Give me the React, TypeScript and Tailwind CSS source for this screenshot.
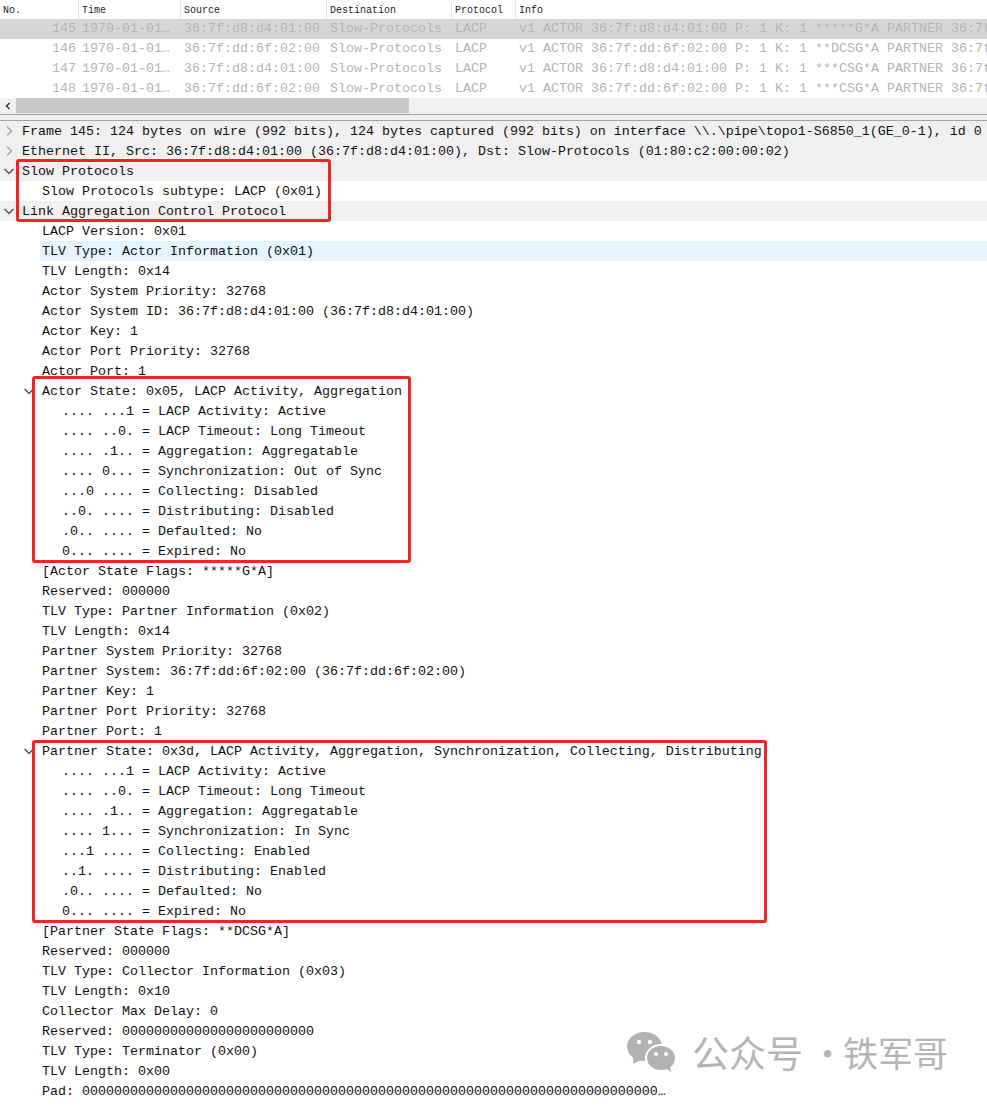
import React from "react";

const mono = "font-['Liberation_Mono',monospace]";

const packets = [
  ["145", "36:7f:d8:d4:01:00", "v1 ACTOR 36:7f:d8:d4:01:00 P: 1 K: 1 *****G*A PARTNER 36:7f:dd:6f:02:00"],
  ["146", "36:7f:dd:6f:02:00", "v1 ACTOR 36:7f:dd:6f:02:00 P: 1 K: 1 **DCSG*A PARTNER 36:7f:d8:d4:01:00"],
  ["147", "36:7f:d8:d4:01:00", "v1 ACTOR 36:7f:d8:d4:01:00 P: 1 K: 1 ***CSG*A PARTNER 36:7f:dd:6f:02:00"],
  ["148", "36:7f:dd:6f:02:00", "v1 ACTOR 36:7f:dd:6f:02:00 P: 1 K: 1 ***CSG*A PARTNER 36:7f:d8:d4:01:00"],
];

type Row = { t: string; l: 0 | 1 | 2; c?: "r" | "d"; bg?: string };

const rows: Row[] = [
  { t: "Frame 145: 124 bytes on wire (992 bits), 124 bytes captured (992 bits) on interface \\\\.\\pipe\\topo1-S6850_1(GE_0-1), id 0", l: 0, c: "r", bg: "bg-[#f0f0f0]" },
  { t: "Ethernet II, Src: 36:7f:d8:d4:01:00 (36:7f:d8:d4:01:00), Dst: Slow-Protocols (01:80:c2:00:00:02)", l: 0, c: "r", bg: "bg-[#f0f0f0]" },
  { t: "Slow Protocols", l: 0, c: "d", bg: "bg-[#f0f0f0]" },
  { t: "Slow Protocols subtype: LACP (0x01)", l: 1 },
  { t: "Link Aggregation Control Protocol", l: 0, c: "d", bg: "bg-[#f0f0f0]" },
  { t: "LACP Version: 0x01", l: 1 },
  { t: "TLV Type: Actor Information (0x01)", l: 1, bg: "sel" },
  { t: "TLV Length: 0x14", l: 1 },
  { t: "Actor System Priority: 32768", l: 1 },
  { t: "Actor System ID: 36:7f:d8:d4:01:00 (36:7f:d8:d4:01:00)", l: 1 },
  { t: "Actor Key: 1", l: 1 },
  { t: "Actor Port Priority: 32768", l: 1 },
  { t: "Actor Port: 1", l: 1 },
  { t: "Actor State: 0x05, LACP Activity, Aggregation", l: 1, c: "d" },
  { t: ".... ...1 = LACP Activity: Active", l: 2 },
  { t: ".... ..0. = LACP Timeout: Long Timeout", l: 2 },
  { t: ".... .1.. = Aggregation: Aggregatable", l: 2 },
  { t: ".... 0... = Synchronization: Out of Sync", l: 2 },
  { t: "...0 .... = Collecting: Disabled", l: 2 },
  { t: "..0. .... = Distributing: Disabled", l: 2 },
  { t: ".0.. .... = Defaulted: No", l: 2 },
  { t: "0... .... = Expired: No", l: 2 },
  { t: "[Actor State Flags: *****G*A]", l: 1 },
  { t: "Reserved: 000000", l: 1 },
  { t: "TLV Type: Partner Information (0x02)", l: 1 },
  { t: "TLV Length: 0x14", l: 1 },
  { t: "Partner System Priority: 32768", l: 1 },
  { t: "Partner System: 36:7f:dd:6f:02:00 (36:7f:dd:6f:02:00)", l: 1 },
  { t: "Partner Key: 1", l: 1 },
  { t: "Partner Port Priority: 32768", l: 1 },
  { t: "Partner Port: 1", l: 1 },
  { t: "Partner State: 0x3d, LACP Activity, Aggregation, Synchronization, Collecting, Distributing", l: 1, c: "d" },
  { t: ".... ...1 = LACP Activity: Active", l: 2 },
  { t: ".... ..0. = LACP Timeout: Long Timeout", l: 2 },
  { t: ".... .1.. = Aggregation: Aggregatable", l: 2 },
  { t: ".... 1... = Synchronization: In Sync", l: 2 },
  { t: "...1 .... = Collecting: Enabled", l: 2 },
  { t: "..1. .... = Distributing: Enabled", l: 2 },
  { t: ".0.. .... = Defaulted: No", l: 2 },
  { t: "0... .... = Expired: No", l: 2 },
  { t: "[Partner State Flags: **DCSG*A]", l: 1 },
  { t: "Reserved: 000000", l: 1 },
  { t: "TLV Type: Collector Information (0x03)", l: 1 },
  { t: "TLV Length: 0x10", l: 1 },
  { t: "Collector Max Delay: 0", l: 1 },
  { t: "Reserved: 000000000000000000000000", l: 1 },
  { t: "TLV Type: Terminator (0x00)", l: 1 },
  { t: "TLV Length: 0x00", l: 1 },
  { t: "Pad: 000000000000000000000000000000000000000000000000000000000000000000000000…", l: 1 },
];

const indent = ["pl-[22px]", "pl-[42px]", "pl-[62px]"];
const chevronPos = ["left-[3px]", "left-[23px]", "left-[43px]"];

function Chevron({ dir, level }: { dir: "r" | "d"; level: number }) {
  return (
    <svg
      width="12"
      height="12"
      viewBox="0 0 12 12"
      className={`absolute top-[4px] ${chevronPos[level]}`}
      fill="none"
      stroke={dir === "r" ? "#a8a8a8" : "#555"}
      strokeWidth="1.5"
    >
      {dir === "r" ? <path d="M4 1.5 L8.5 6 L4 10.5" /> : <path d="M1.5 4 L6 8.5 L10.5 4" />}
    </svg>
  );
}

function Head({ w, children }: { w: string; children: React.ReactNode }) {
  return (
    <div className={`${w} shrink-0 h-full pl-[3px] border-r border-[#e5e5e5] overflow-hidden whitespace-nowrap`}>
      {children}
    </div>
  );
}

function RedBox({ cls }: { cls: string }) {
  return <div className={`absolute border-[3px] border-[#f52222] rounded-[3px] pointer-events-none ${cls}`} />;
}

export default function App() {
  return (
    <div className={`relative w-[987px] h-[1106px] bg-white overflow-hidden ${mono} text-[13.33px] text-[#111]`}>
      {/* packet list header */}
      <div className="flex h-[19px] items-center text-[10px] text-[#222] leading-[21px]">
        <Head w="w-[79px]">No.</Head>
        <Head w="w-[102px]">Time</Head>
        <Head w="w-[146px]">Source</Head>
        <Head w="w-[125px]">Destination</Head>
        <Head w="w-[64px]">Protocol</Head>
        <div className="flex-1 h-full pl-[3px] whitespace-nowrap">Info</div>
      </div>
      {/* packet list */}
      {packets.map((p, i) => (
        <div
          key={p[0]}
          className={`flex ${i === 3 ? "h-[19px]" : "h-[20px]"} leading-[20px] text-[#b4b4b4] whitespace-nowrap overflow-hidden ${i === 0 ? "bg-[#d6d6d6]" : "bg-white"}`}
        >
          <div className="w-[76px] shrink-0 text-right">{p[0]}</div>
          <div className="w-[108px] shrink-0 pl-[6px]">1970-01-01…</div>
          <div className="w-[146px] shrink-0">{p[1]}</div>
          <div className="w-[125px] shrink-0">Slow-Protocols</div>
          <div className="w-[64px] shrink-0">LACP</div>
          <div className="flex-1 overflow-hidden">{p[2]}</div>
        </div>
      ))}
      {/* horizontal scrollbar */}
      <div className="flex h-[16px] bg-[#f0f0f0]">
        <div className="w-[16px] flex items-center justify-center">
          <svg width="8" height="8" viewBox="0 0 8 8" fill="none" stroke="#333" strokeWidth="1.5">
            <path d="M5.5 1 L2.5 4 L5.5 7" />
          </svg>
        </div>
        <div className="w-[393px] h-[15px] bg-[#c8c8c8]" />
      </div>
      {/* splitter */}
      <div className="h-[7px] bg-[#f0f0f0] border-y border-[#a0a4a8]" />
      {/* details tree */}
      <div>
        {rows.map((r, i) => (
          <div
            key={i}
            className={`relative h-[20px] pt-[1px] leading-[20px] whitespace-nowrap overflow-hidden ${indent[r.l]} ${
              r.bg === "sel" ? "" : r.bg ?? ""
            }`}
          >
            {r.bg === "sel" && <div className="absolute left-[40px] right-0 top-0 bottom-0 bg-[#e5f3ff]" />}
            {r.c && <Chevron dir={r.c} level={r.l} />}
            <span className="relative">{r.t}</span>
          </div>
        ))}
      </div>
      {/* red annotation boxes */}
      <RedBox cls="left-[16px] top-[159px] w-[315px] h-[63px]" />
      <RedBox cls="left-[32px] top-[376px] w-[379px] h-[187px]" />
      <RedBox cls="left-[32px] top-[740px] w-[735px] h-[183px]" />
      {/* watermark */}
      <div className="absolute left-[627px] top-[1030px] flex items-center font-['Noto_Sans_CJK_SC',sans-serif] text-[#b4b4b4] leading-[44px]">
        <svg width="50" height="42" viewBox="0 0 50 42" className="mr-[15px]" fill="#b2b2b2">
          <ellipse cx="17.5" cy="15.5" rx="17.5" ry="14.5" />
          <path d="M6 25 L6.5 33 L15 28 Z" />
          <ellipse cx="34" cy="27" rx="15" ry="13" stroke="#fff" strokeWidth="2" />
          <path d="M39 37 L44 41 L43 34 Z" />
          <circle cx="12" cy="11" r="2.2" fill="#fff" />
          <circle cx="23" cy="11" r="2.2" fill="#fff" />
          <circle cx="29" cy="23" r="2" fill="#fff" />
          <circle cx="39" cy="23" r="2" fill="#fff" />
        </svg>
        <span className="text-[37px]">公众号</span>
        <span className="ml-[7px] -mr-[2px] text-[35px]">·</span>
        <span className="text-[35px]">铁军哥</span>
      </div>
    </div>
  );
}
